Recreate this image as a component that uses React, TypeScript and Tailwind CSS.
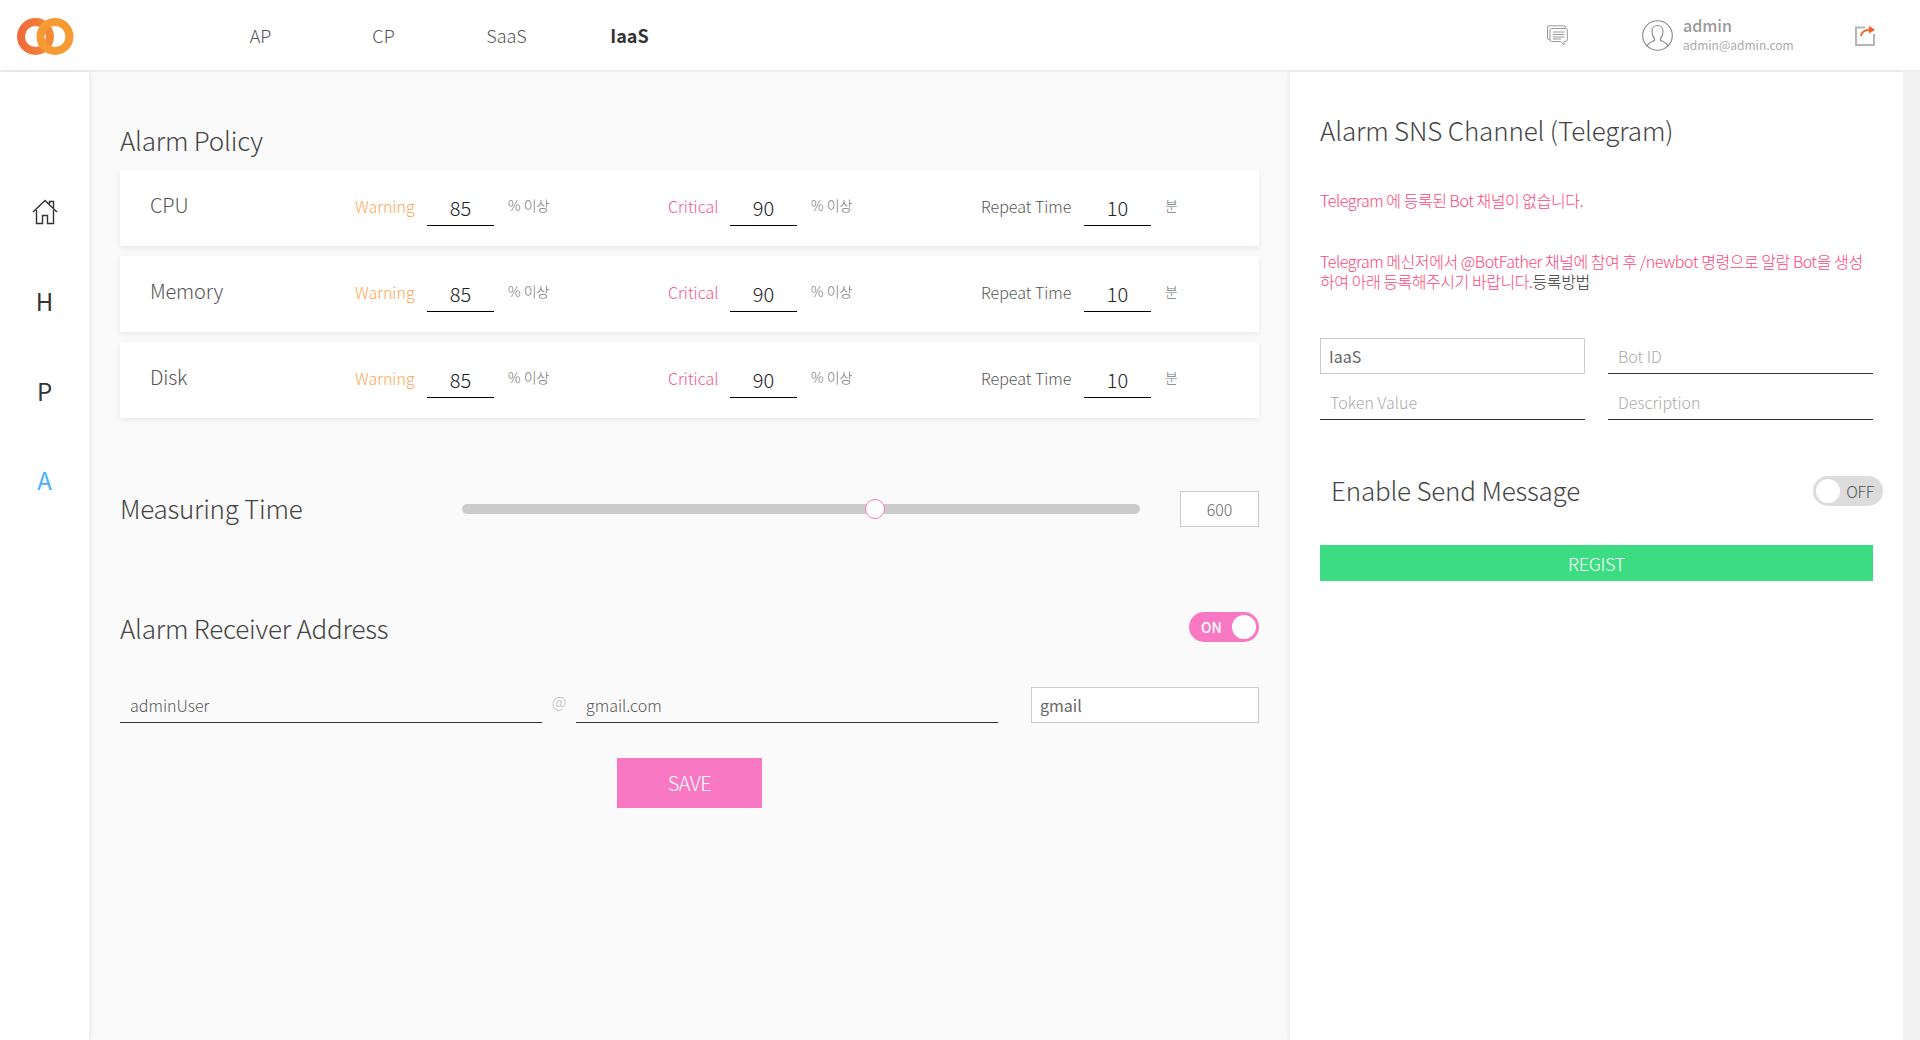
import React from "react";

const policies = ["CPU", "Memory", "Disk"];

// Two overlapping rings, top left of the sidebar
function Logo() {
  return (
    <svg width="57" height="37" viewBox="0 0 57 37" fill="none">
      <defs>
        <linearGradient id="ringLeft" x1="0" y1="0" x2="1" y2="0">
          <stop offset="0" stopColor="#ee6c3c" />
          <stop offset="1" stopColor="#f38a35" />
        </linearGradient>
      </defs>
      <circle cx="18.5" cy="18.5" r="14.5" stroke="url(#ringLeft)" strokeWidth="8" />
      <circle cx="38" cy="18.5" r="14.5" stroke="#f69a34" strokeWidth="8" />
    </svg>
  );
}

function HomeIcon() {
  return (
    <svg width="26" height="26" viewBox="0 0 26 26" fill="none" stroke="#333" strokeWidth="1.4">
      <path d="M1 13 13 1.5 25 13" />
      <path d="M17.5 5.5V2.5H21.5V9" />
      <path d="M4.5 11V24.5H10.5V16.5H15.5V24.5H21.5V11" />
    </svg>
  );
}

function ChatIcon() {
  return (
    <svg width="21" height="21" viewBox="0 0 21 21" fill="none" stroke="#999" strokeWidth="1">
      <path d="M3 14.5H2Q.5 14.5.5 13V2Q.5.8 2 .8H17Q18.5.8 18.5 2V3" />
      <path d="M4.5 3.500H18.500Q20.300 3.500 20.300 5V15Q20.300 16.500 18.500 16.500H17V20L13.500 16.500H4.500Q3 16.500 3 15V5Q3 3.500 4.500 3.500Z" fill="#fff" />
      <path d="M6 7H17.500M6 9.500H17.500M6 12H17.500M6 14H14" />
    </svg>
  );
}

function UserIcon() {
  return (
    <svg width="31" height="31" viewBox="0 0 31 31" fill="none" stroke="#888" strokeWidth="1.1">
      <circle cx="15.500" cy="15.500" r="14.800" />
      <path d="M5 26.500C6 22.500 9.500 22 12.500 20.500V18.500C10.500 16.500 10 14 10 11.500C10 8 12.300 5.500 15.500 5.500S21 8 21 11.500C21 14 20.500 16.500 18.500 18.500V20.500C21.500 22 25 22.500 26 26.500" />
    </svg>
  );
}

function ShareIcon() {
  return (
    <svg width="21" height="21" viewBox="0 0 21 21" fill="none">
      <path d="M10 2.500H1V20H19V9" stroke="#b5b5b5" strokeWidth="2" />
      <path d="M6 11C6.500 7 9 5 14 4.800" stroke="#ff5a1f" strokeWidth="1.800" />
      <path d="M14 1 20 4.800 14 8.500Z" fill="#ff5a1f" />
    </svg>
  );
}

function Threshold({
  label,
  labelClass,
  labelWidth,
  value,
  unit,
  width,
}: {
  label: string;
  labelClass: string;
  labelWidth: string;
  value: string;
  unit: string;
  width: string;
}) {
  return (
    <div className={`flex items-center ${width}`}>
      <span className={`-mt-[5px] text-[16px] whitespace-nowrap ${labelClass} ${labelWidth}`}>{label}</span>
      <input
        readOnly
        value={value}
        className="w-[67px] h-[36px] border-b border-black bg-transparent text-center text-[20px] text-[#222] outline-none"
      />
      <span className="ml-[14px] -mt-[5px] text-[14px] text-[#777] whitespace-nowrap">{unit}</span>
    </div>
  );
}

function PolicyRow({ name }: { name: string }) {
  return (
    <div className="flex items-center h-[76px] pl-[30px] bg-white shadow-[0_2px_6px_rgba(0,0,0,0.08)]">
      <span className="w-[205px] -mt-[6px] text-[20px] tracking-[-0.2px] text-[#555]">{name}</span>
      <Threshold label="Warning" labelClass="text-[#ffa552]" labelWidth="w-[72px]" value="85" unit="% 이상" width="w-[313px]" />
      <Threshold label="Critical" labelClass="text-[#f5588a]" labelWidth="w-[62px]" value="90" unit="% 이상" width="w-[313px]" />
      <Threshold label="Repeat Time" labelClass="text-[#555]" labelWidth="w-[103px]" value="10" unit="분" width="w-[220px]" />
    </div>
  );
}

function Toggle({ on }: { on: boolean }) {
  if (on) {
    return (
      <div className="flex items-center justify-between w-[70px] h-[30px] pl-3 pr-[3px] rounded-full bg-[#f878c3]">
        <span className="text-[14px] font-medium text-white">ON</span>
        <span className="w-[24px] h-[24px] rounded-full bg-white" />
      </div>
    );
  }
  return (
    <div className="flex items-center justify-between w-[70px] h-[30px] pl-[3px] pr-[9px] rounded-full bg-[#dcdcdc]">
      <span className="w-[24px] h-[24px] rounded-full bg-white" />
      <span className="text-[16px] tracking-[-0.3px] text-[#555]">OFF</span>
    </div>
  );
}

export default function App() {
  return (
    <div className="flex flex-col w-[1920px] h-[1040px] overflow-hidden bg-white font-['Noto_Sans_CJK_KR','Noto_Sans',sans-serif] font-light">
      {/* Top bar */}
      <header className="flex items-center h-[72px] shrink-0 border-b-2 border-[#eeeeee] bg-white">
        <div className="flex items-center justify-center w-[90px] pt-[2px]">
          <Logo />
        </div>
        <nav className="flex ml-[109px] text-[18px] text-[#555]">
          <a className="w-[123px] text-center">AP</a>
          <a className="w-[123px] text-center">CP</a>
          <a className="w-[123px] text-center">SaaS</a>
          <a className="w-[123px] text-center font-bold text-[#333]">IaaS</a>
        </nav>
        <div className="flex items-center ml-auto pr-[44px]">
          <ChatIcon />
          <div className="ml-[74px]">
            <UserIcon />
          </div>
          <div className="ml-[10px] w-[172px] flex flex-col leading-[20px]">
            <span className="text-[16px] font-medium text-[#999]">admin</span>
            <span className="text-[12px] font-normal text-[#aaa]">admin@admin.com</span>
          </div>
          <ShareIcon />
        </div>
      </header>

      <div className="flex flex-1 min-h-0">
        {/* Sidebar */}
        <aside className="z-10 flex flex-col items-center w-[89px] shrink-0 pt-[127px] bg-white shadow-[2px_0_5px_rgba(0,0,0,0.07)]">
          <div className="flex items-center justify-center h-[26px]">
            <HomeIcon />
          </div>
          <span className="mt-[60px] h-[32px] text-[24px] leading-[32px] font-normal text-[#333]">H</span>
          <span className="mt-[58px] h-[32px] text-[24px] leading-[32px] font-normal text-[#333]">P</span>
          <span className="mt-[57px] h-[32px] text-[24px] leading-[32px] font-normal text-[#47b0ff]">A</span>
        </aside>

        {/* Alarm settings */}
        <main className="w-[1201px] shrink-0 pl-[31px] pr-[31px] bg-[#fafafa]">
          <h2 className="mt-[49px] h-[38px] text-[26px] leading-[38px] tracking-[-0.2px] font-light text-[#444]">Alarm Policy</h2>
          <div className="flex flex-col gap-[10px] mt-[11px]">
            {policies.map((name) => (
              <PolicyRow key={name} name={name} />
            ))}
          </div>

          <div className="flex items-center mt-[73px] h-[36px]">
            <h2 className="w-[342px] -mt-[3px] text-[26px] tracking-[-0.25px] font-light text-[#444]">Measuring Time</h2>
            <div className="relative w-[678px] h-[10px] rounded-full bg-[#cbcbcb]">
              <span className="absolute left-[403px] -top-[5px] w-[20px] h-[20px] rounded-full border border-[#f878c3] bg-white" />
            </div>
            <input
              readOnly
              value="600"
              className="w-[79px] h-[36px] ml-[40px] border border-[#cccccc] bg-white text-center text-[16px] text-[#666] outline-none"
            />
          </div>

          <div className="flex items-center justify-between mt-[85px] h-[30px]">
            <h2 className="text-[26px] tracking-[-0.2px] font-light text-[#444]">Alarm Receiver Address</h2>
            <Toggle on />
          </div>

          <div className="flex items-end mt-[45px]">
            <input
              readOnly
              value="adminUser"
              className="w-[422px] h-[36px] px-[10px] border-b border-[#333] bg-transparent text-[16px] text-[#555] outline-none"
            />
            <span className="w-[34px] pb-[10px] text-center text-[16px] text-[#bbb]">@</span>
            <input
              readOnly
              value="gmail.com"
              className="w-[422px] h-[36px] px-[10px] border-b border-[#333] bg-transparent text-[16px] text-[#555] outline-none"
            />
            <input
              readOnly
              value="gmail"
              className="w-[228px] h-[36px] ml-[33px] px-2 border border-[#cccccc] bg-white text-[16px] font-normal text-[#666] outline-none"
            />
          </div>

          <div className="flex justify-center mt-[35px]">
            <button className="w-[145px] h-[50px] bg-[#f878c3] text-[20px] tracking-[-0.5px] text-white">SAVE</button>
          </div>
        </main>

        {/* Telegram channel */}
        <section className="w-[613px] shrink-0 pl-[30px] pr-[30px] bg-white shadow-[-2px_0_4px_rgba(0,0,0,0.06)]">
          <h2 className="mt-[39px] h-[38px] text-[26px] leading-[38px] tracking-[-0.15px] font-light text-[#444]">Alarm SNS Channel (Telegram)</h2>
          <p className="mt-[41px] text-[16px] leading-[20px] tracking-[-0.45px] text-[#ff4377]">Telegram 에 등록된 Bot 채널이 없습니다.</p>
          <p className="mt-[41px] w-[553px] text-[16px] leading-[20px] tracking-[-0.45px] text-[#ff4377]">
            Telegram 메신저에서 @BotFather 채널에 참여 후 /newbot 명령으로 알람 Bot을 생성하여 아래 등록해주시기 바랍니다.
            <span className="text-[#333]">등록방법</span>
          </p>

          <div className="grid grid-cols-[265px_265px] gap-x-[23px] gap-y-[10px] mt-[47px]">
            <input
              readOnly
              value="IaaS"
              className="h-[36px] px-2 border border-[#cccccc] bg-white text-[16px] font-normal text-[#666] outline-none"
            />
            <input
              placeholder="Bot ID"
              className="h-[36px] px-[10px] border-b border-[#333] text-[16px] outline-none placeholder:text-[#aaa]"
            />
            <input
              placeholder="Token Value"
              className="h-[36px] px-[10px] border-b border-[#333] text-[16px] outline-none placeholder:text-[#aaa]"
            />
            <input
              placeholder="Description"
              className="h-[36px] px-[10px] border-b border-[#333] text-[16px] outline-none placeholder:text-[#aaa]"
            />
          </div>

          <div className="flex items-center justify-between w-[563px] mt-[56px] h-[30px] pl-[11px]">
            <span className="-mt-[3px] text-[26px] tracking-[-0.2px] font-light text-[#444]">Enable Send Message</span>
            <Toggle on={false} />
          </div>

          <button className="w-[553px] h-[36px] mt-[39px] bg-[#3cdc82] text-[18px] tracking-[-0.3px] text-white">REGIST</button>
        </section>

        {/* Scrollbar track */}
        <div className="flex-1 bg-[#f1f1f1]" />
      </div>
    </div>
  );
}
